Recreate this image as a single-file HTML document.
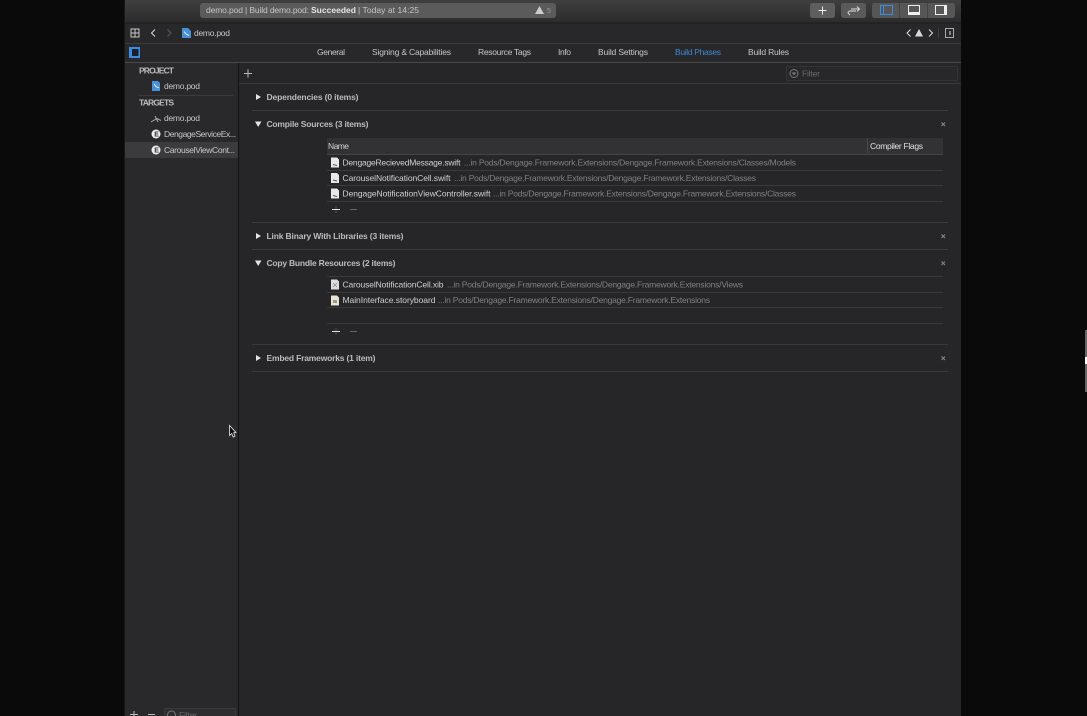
<!DOCTYPE html>
<html><head><meta charset="utf-8"><style>
html,body{margin:0;padding:0;background:#0a0a0a;width:1087px;height:716px;overflow:hidden}
svg{display:block}
text{font-family:"Liberation Sans",sans-serif;font-size:8.500px;fill:#c6c6c6}
.b{font-weight:bold}
.h{font-weight:bold;fill:#bcbcbc}
.p{fill:#808080}
.n{fill:#d0d0d0}
.l{stroke:#3a3a3c;stroke-width:1;fill:none}
.s{stroke:#dcdcdc;stroke-width:1;fill:none}
</style></head><body>
<svg width="1087" height="716" viewBox="0 0 1087 716" xmlns="http://www.w3.org/2000/svg">
<defs><linearGradient id="tb" x1="0" y1="0" x2="0" y2="1"><stop offset="0" stop-color="#3f3f3f"/><stop offset="1" stop-color="#2b2b2b"/></linearGradient></defs>
<rect width="1087" height="716" fill="#0a0a0a"/>
<rect x="124.500" y="0" width="836.500" height="716" fill="#262628"/>
<rect x="125" y="0" width="836" height="23" fill="url(#tb)"/>
<rect x="125" y="23" width="836" height="40" fill="#28282a"/>
<rect x="125" y="22.500" width="836" height="1" fill="#1c1c1c"/>
<path class="l" d="M125 43.500H961"/>
<path d="M125 62.500H961" stroke="#48484a" fill="none"/>
<rect x="125" y="63" width="113" height="653" fill="#29292b"/>
<path d="M238.500 63V716" stroke="#111" fill="none"/>

<!-- activity pill -->
<rect x="200" y="3" width="356" height="15" rx="3" fill="#5b5b5b"/>
<text x="206" y="13" textLength="103">demo.pod | Build demo.pod:</text>
<text x="311" y="13" textLength="45" class="b" style="fill:#e4e4e4">Succeeded</text>
<text x="358" y="13" textLength="61">| Today at 14:25</text>
<path d="M535 14L539.500 6L544 14Z" fill="#ccc"/>
<text x="547" y="13" style="font-size:7px;fill:#999">5</text>

<!-- toolbar buttons -->
<rect x="810" y="3" width="25" height="15" rx="2.500" fill="#5e5e5e"/>
<path d="M822.500 6.500V14.500M818.500 10.500H826.500" stroke="#eee" fill="none"/>
<rect x="841" y="3" width="25" height="15" rx="2.500" fill="#5a5a5a"/>
<path d="M851 9H859M857 6.500L859.500 9L857 11.500" stroke="#ddd" stroke-width=".9" fill="none"/>
<path d="M856 11H850.500C848 11 848 13 848 13L850 15" stroke="#ddd" stroke-width=".9" fill="none"/>
<rect x="872" y="3" width="83" height="15" rx="2.500" fill="#565656"/>
<path d="M899.500 3V18M927.500 3V18" stroke="#444" fill="none"/>
<rect x="880.500" y="5.500" width="12" height="9" fill="none" stroke="#3d8bdc"/>
<path d="M883.500 5.500V14.500" stroke="#3d8bdc" fill="none"/>
<rect x="908.500" y="5.500" width="11" height="9" fill="none" stroke="#eee"/>
<rect x="908" y="12" width="12" height="3" fill="#eee"/>
<rect x="935.500" y="5.500" width="11" height="9" fill="none" stroke="#eee"/>
<rect x="944" y="5" width="3" height="10" fill="#eee"/>

<!-- path bar -->
<rect x="131" y="29" width="8" height="8" fill="none" stroke="#c8c8c8"/>
<path d="M135 29V37M131 33H139" stroke="#c8c8c8" fill="none"/>
<path d="M155 29.500L151.500 33L155 36.500" class="s"/>
<path d="M167.500 29.500L171 33L167.500 36.500" stroke="#5a5a5a" fill="none"/>
<path d="M182 28H188L191 31V38H182Z" fill="#4a90d9"/>
<path d="M184 31.500L186 34L189 35.500" stroke="#fff" fill="none" stroke-width=".8"/>
<text x="194" y="36" textLength="36">demo.pod</text>
<path d="M910.500 29.500L907 33L910.500 36.500" class="s"/>
<path d="M915 36.500L919 29L923 36.500Z" fill="#d8d8d8"/>
<path d="M929 29.500L932.500 33L929 36.500" class="s"/>
<path d="M938.500 28V38" stroke="#3d3d3d" fill="none"/>
<rect x="945.500" y="28.500" width="8" height="9" fill="none" stroke="#aaa"/>
<path d="M950 31V35" stroke="#ddd" fill="none"/>

<!-- tab bar -->
<rect x="129" y="47" width="11" height="11" fill="#3d8bdc"/>
<rect x="132" y="49" width="6.500" height="7" fill="#15202c"/>
<text x="317" y="55" textLength="28">General</text>
<text x="372" y="55" textLength="79">Signing &amp; Capabilities</text>
<text x="478" y="55" textLength="53">Resource Tags</text>
<text x="558" y="55" textLength="13">Info</text>
<text x="598" y="55" textLength="50">Build Settings</text>
<text x="675" y="55" textLength="46" style="fill:#3f86d4">Build Phases</text>
<text x="748" y="55" textLength="41">Build Rules</text>

<!-- sidebar -->
<text x="139" y="73.500" textLength="35" class="h">PROJECT</text>
<path d="M152 81H158L160 83V91H152Z" fill="#4a90d9"/>
<path d="M154 84L156 86.500L159 88" stroke="#fff" stroke-width=".8" fill="none"/>
<text x="164" y="89" textLength="36">demo.pod</text>
<path class="l" d="M139 95.500H233"/>
<text x="139" y="105.500" textLength="35" class="h">TARGETS</text>
<path d="M151 122L157 118.500L161 120.500M155 116L158 122" stroke="#aaa" fill="none"/>
<text x="164" y="121" textLength="36">demo.pod</text>
<circle cx="156" cy="134" r="4.500" fill="#eee"/>
<text x="154.200" y="136.500" class="b" style="font-size:7px;fill:#333">E</text>
<text x="164" y="137" textLength="72">DengageServiceEx...</text>
<rect x="125" y="142" width="113" height="16" fill="#3b3b3d"/>
<circle cx="156" cy="150" r="4.500" fill="#eee"/>
<text x="154.200" y="152.500" class="b" style="font-size:7px;fill:#333">E</text>
<text x="164" y="153" textLength="71">CarouselViewCont...</text>

<!-- filter row -->
<path d="M244 73.500H252M248 69.500V77.500" stroke="#bbb" fill="none"/>
<rect x="786.500" y="66.500" width="171" height="14" rx="1" fill="#28282a" stroke="#333335"/>
<circle cx="794" cy="73.500" r="4" fill="none" stroke="#777"/>
<path d="M791.500 72.500H796.500L794 75.500Z" fill="#777"/>
<text x="802" y="76.500" textLength="18" style="fill:#6a6a6a">Filter</text>
<path class="l" d="M239 83.500H961"/>

<!-- sections -->
<path d="M256 94L261 97L256 100Z" fill="#e4e4e4"/>
<text x="266.500" y="100" textLength="92" class="h">Dependencies (0 items)</text>
<path class="l" d="M252 110.500H948"/>

<path d="M255 121.500H261.500L258.200 127Z" fill="#e4e4e4"/>
<text x="266.500" y="127" textLength="102" class="h">Compile Sources (3 items)</text>
<path d="M941.500 122.500L945 126M945 122.500L941.500 126" stroke="#888" fill="none"/>

<rect x="327" y="138" width="616" height="16" fill="#323234"/>
<path d="M327 154.500H943" stroke="#454547" fill="none"/>
<path d="M867.500 139V153" stroke="#4a4a4c" fill="none"/>
<text x="328" y="149" textLength="21" class="n">Name</text>
<text x="870" y="149" textLength="53" class="n" style="fill:#e0e0e0">Compiler Flags</text>

<path d="M331 157.500H337L339 159.500V167.500H331Z" fill="#e8e8e8"/><path d="M333 164.500L337 165.500" stroke="#555" fill="none"/>
<text x="342.500" y="165.500" textLength="118" class="n">DengageRecievedMessage.swift</text>
<text x="464" y="165.500" textLength="332" class="p">...in Pods/Dengage.Framework.Extensions/Dengage.Framework.Extensions/Classes/Models</text>
<path class="l" d="M327 170.500H943"/>
<path d="M331 173H337L339 175V183H331Z" fill="#e8e8e8"/><path d="M333 180L337 181" stroke="#555" fill="none"/>
<text x="342.500" y="181" textLength="108" class="n">CarouselNotificationCell.swift</text>
<text x="454" y="181" textLength="302" class="p">...in Pods/Dengage.Framework.Extensions/Dengage.Framework.Extensions/Classes</text>
<path class="l" d="M327 185.500H943"/>
<path d="M331 188.500H337L339 190.500V198.500H331Z" fill="#e8e8e8"/><path d="M333 195.500L337 196.500" stroke="#555" fill="none"/>
<text x="342.500" y="196.500" textLength="148" class="n">DengageNotificationViewController.swift</text>
<text x="493" y="196.500" textLength="303" class="p">...in Pods/Dengage.Framework.Extensions/Dengage.Framework.Extensions/Classes</text>
<path class="l" d="M327 201.500H943"/>
<path d="M336 206V213" stroke="#666" fill="none" stroke-width=".7"/>
<path d="M332 209.500H340" stroke="#ddd" fill="none"/>
<path d="M350 209.500H357" stroke="#666" fill="none"/>
<path class="l" d="M252 222.500H948"/>

<path d="M256 233L261 236L256 239Z" fill="#e4e4e4"/>
<text x="266.500" y="239" textLength="137" class="h">Link Binary With Libraries (3 items)</text>
<path d="M941.500 234.500L945 238M945 234.500L941.500 238" stroke="#888" fill="none"/>
<path class="l" d="M252 249.500H948"/>

<path d="M255 260.500H261.500L258.200 266Z" fill="#e4e4e4"/>
<text x="266.500" y="266" textLength="129" class="h">Copy Bundle Resources (2 items)</text>
<path d="M941.500 261.500L945 265M945 261.500L941.500 265" stroke="#888" fill="none"/>
<path class="l" d="M327 276.500H943"/>

<path d="M331 279.500H337L339 281.500V289.500H331Z" fill="#ddd"/><path d="M333 283L337 287M337 283L333 287" stroke="#888" fill="none" stroke-width=".7"/>
<text x="342.500" y="287.500" textLength="101" class="n">CarouselNotificationCell.xib</text>
<text x="447" y="287.500" textLength="296" class="p">...in Pods/Dengage.Framework.Extensions/Dengage.Framework.Extensions/Views</text>
<path class="l" d="M327 292.500H943"/>
<path d="M331 295.500H337L339 297.500V305.500H331Z" fill="#e8e4d0"/><path d="M333 300H337V303H333Z" fill="#999"/>
<text x="342.500" y="303" textLength="93" class="n">MainInterface.storyboard</text>
<text x="438" y="303" textLength="272" class="p">...in Pods/Dengage.Framework.Extensions/Dengage.Framework.Extensions</text>
<path class="l" d="M327 307.500H943"/>
<path class="l" d="M327 323.500H943"/>
<path d="M336 328V335" stroke="#666" fill="none" stroke-width=".7"/>
<path d="M332 331.500H340" stroke="#ddd" fill="none"/>
<path d="M350 331.500H357" stroke="#666" fill="none"/>
<path class="l" d="M252 344.500H948"/>

<path d="M256 355L261 358L256 361Z" fill="#e4e4e4"/>
<text x="266.500" y="361" textLength="109" class="h">Embed Frameworks (1 item)</text>
<path d="M941.500 356.500L945 360M945 356.500L941.500 360" stroke="#888" fill="none"/>
<path class="l" d="M252 371.500H948"/>

<!-- bottom sidebar -->
<path d="M130 714.500H138M134 711V716" stroke="#bbb" fill="none"/>
<path d="M148 714.500H155" stroke="#bbb" fill="none"/>
<rect x="164.500" y="708.500" width="71" height="12" rx="1" fill="#2e2e30" stroke="#39393b"/>
<circle cx="171.500" cy="715" r="4" fill="none" stroke="#777"/>
<text x="179" y="718" textLength="18" style="fill:#6a6a6a">Filter</text>

<!-- far-right scrollbar -->
<rect x="1085" y="330" width="2" height="62" fill="#666"/>
<rect x="1085" y="357" width="2" height="7" fill="#fff"/>

<!-- cursor -->
<path d="M229.500 425.500V435.500L231.700 433.500L233.200 437L235 436L233.600 432.800L236 432.500Z" fill="#111" stroke="#eee" stroke-width=".8"/>
</svg>
</body></html>
